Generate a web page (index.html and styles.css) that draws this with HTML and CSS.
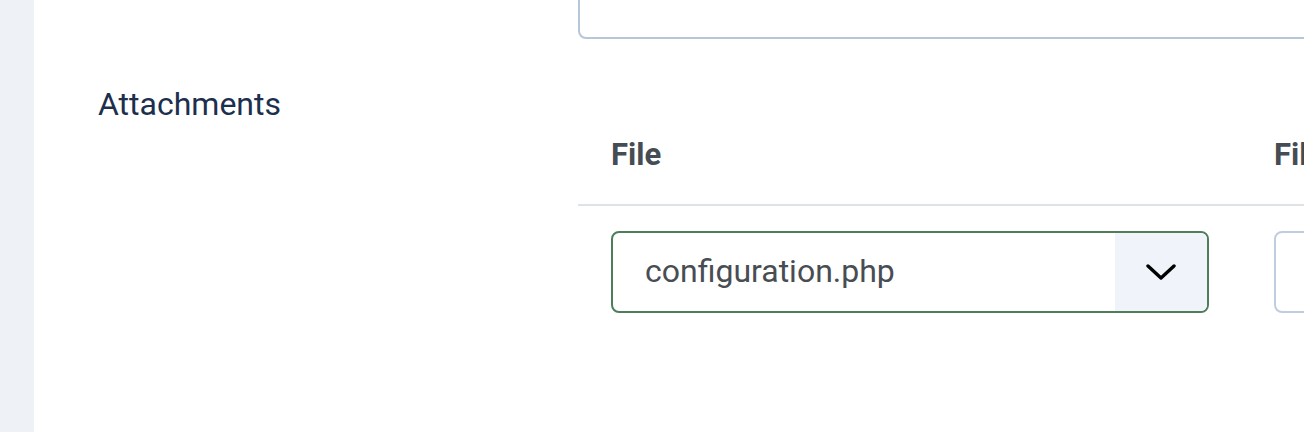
FILE: index.html
```html
<!DOCTYPE html>
<html lang="en">
<head>
<meta charset="utf-8">
<title>Attachments</title>
<link rel="stylesheet" href="styles.css">
</head>
<body>
<div class="sidebar"></div>
<main class="main">
  <div class="field-row first-row">
    <div class="field-label"></div>
    <div class="field-control">
      <div class="text-input"></div>
    </div>
  </div>
  <div class="field-row attach-row">
    <div class="field-label">Attachments</div>
    <div class="field-control">
      <table class="sub-table">
        <thead>
          <tr>
            <th class="col-file">File</th>
            <th class="col-name">Filename</th>
          </tr>
        </thead>
        <tbody>
          <tr>
            <td class="col-file">
              <div class="select">
                <span class="select-value">configuration.php</span>
                <span class="select-arrow">
                  <svg width="30" height="16" viewBox="0 0 30 16"><path d="M2 2 L15 14 L28 2" fill="none" stroke="#000" stroke-width="3.4" stroke-linecap="round" stroke-linejoin="round"/></svg>
                </span>
              </div>
            </td>
            <td class="col-name">
              <div class="name-input"></div>
            </td>
          </tr>
        </tbody>
      </table>
    </div>
  </div>
</main>
</body>
</html>
```
FILE: styles.css
```css
html, body {
  margin: 0;
  padding: 0;
  height: 432px;
  overflow: hidden;
  background: #ffffff;
}
body {
  display: flex;
  font-family: Roboto, "Liberation Sans", sans-serif;
}
.sidebar {
  width: 34px;
  flex: 0 0 34px;
  height: 432px;
  background: #eef1f6;
}
.main {
  flex: 1;
  min-width: 0;
  overflow: hidden;
  padding-left: 64px;
}
.field-row {
  display: grid;
  grid-template-columns: 480px 1fr;
}
.first-row {
  margin-top: -22px;
}
.text-input {
  height: 61px;
  box-sizing: border-box;
  border: 2px solid #b8c6d9;
  border-radius: 8px;
  width: 900px;
}
.attach-row {
  margin-top: 40px;
}
.field-label {
  font-size: 32px;
  line-height: 48px;
  color: #1c2f4d;
  padding-top: 1px;
}
.field-control {
  min-width: 0;
}
.sub-table {
  border-collapse: collapse;
  width: 1100px;
}
.sub-table th {
  text-align: left;
  font-weight: 700;
  font-size: 31px;
  line-height: 48px;
  color: #464c53;
  padding: 52px 32px 25px 33px;
  border-bottom: 2px solid #dfe3e7;
  white-space: nowrap;
}
.sub-table td {
  padding: 25px 32px 0 33px;
  vertical-align: top;
}
.sub-table .col-file {
  width: 598px;
}
.select {
  width: 598px;
  height: 82px;
  box-sizing: border-box;
  border: 2px solid #4f7d5a;
  border-radius: 8px;
  display: flex;
  overflow: hidden;
}
.select-value {
  flex: 1;
  display: flex;
  align-items: center;
  padding-left: 32px;
  padding-bottom: 2px;
  font-size: 32px;
  color: #484d53;
}
.select-arrow {
  width: 92px;
  background: #f0f3fa;
  display: flex;
  align-items: center;
  justify-content: center;
}
.select-arrow svg {
  display: block;
}
.name-input {
  width: 400px;
  height: 82px;
  box-sizing: border-box;
  border: 2px solid #c0cde0;
  border-radius: 8px;
}
```
